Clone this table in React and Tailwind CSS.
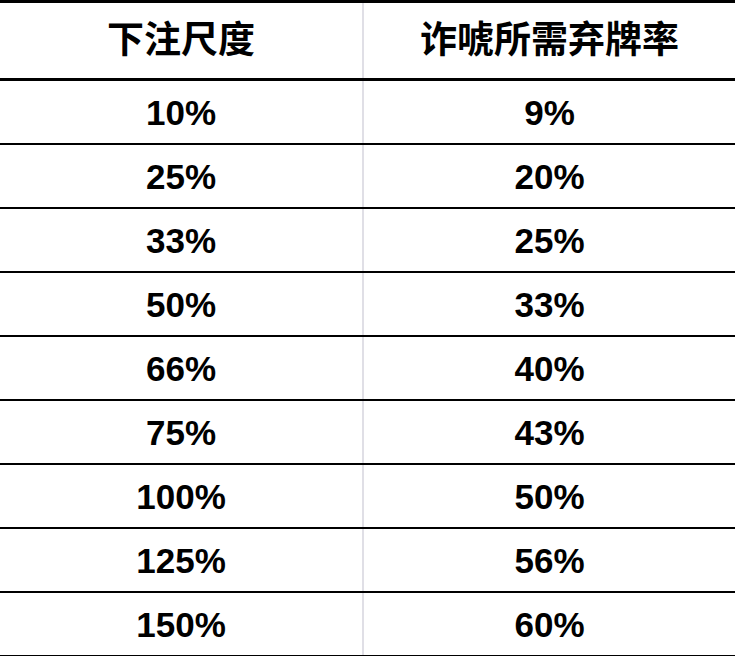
const rows = [
  ['10%', '9%'],
  ['25%', '20%'],
  ['33%', '25%'],
  ['50%', '33%'],
  ['66%', '40%'],
  ['75%', '43%'],
  ['100%', '50%'],
  ['125%', '56%'],
  ['150%', '60%'],
];

export default function App() {
  return (
    <div className="h-[656px] w-[735px] overflow-hidden bg-white font-['Liberation_Sans','Noto_Sans_CJK_SC',sans-serif] font-bold text-black">
      <div className="flex h-[81px] border-y-[3px] border-black">
        <div className="flex w-[364px] items-center justify-center border-r-2 border-[#e0dfe6] text-[37px] leading-none">
          下注尺度
        </div>
        <div className="flex flex-1 items-center justify-center text-[37px] leading-none">
          诈唬所需弃牌率
        </div>
      </div>
      {rows.map(([bet, fold], i) => (
        <div
          key={bet}
          className={
            i === rows.length - 1
              ? 'flex h-[63px] border-b border-black'
              : 'flex h-[64px] border-b-2 border-black'
          }
        >
          <div className="flex w-[364px] items-center justify-center border-r-2 border-[#e0dfe6] text-[35px] leading-none">
            {bet}
          </div>
          <div className="flex flex-1 items-center justify-center text-[35px] leading-none">
            {fold}
          </div>
        </div>
      ))}
    </div>
  );
}
